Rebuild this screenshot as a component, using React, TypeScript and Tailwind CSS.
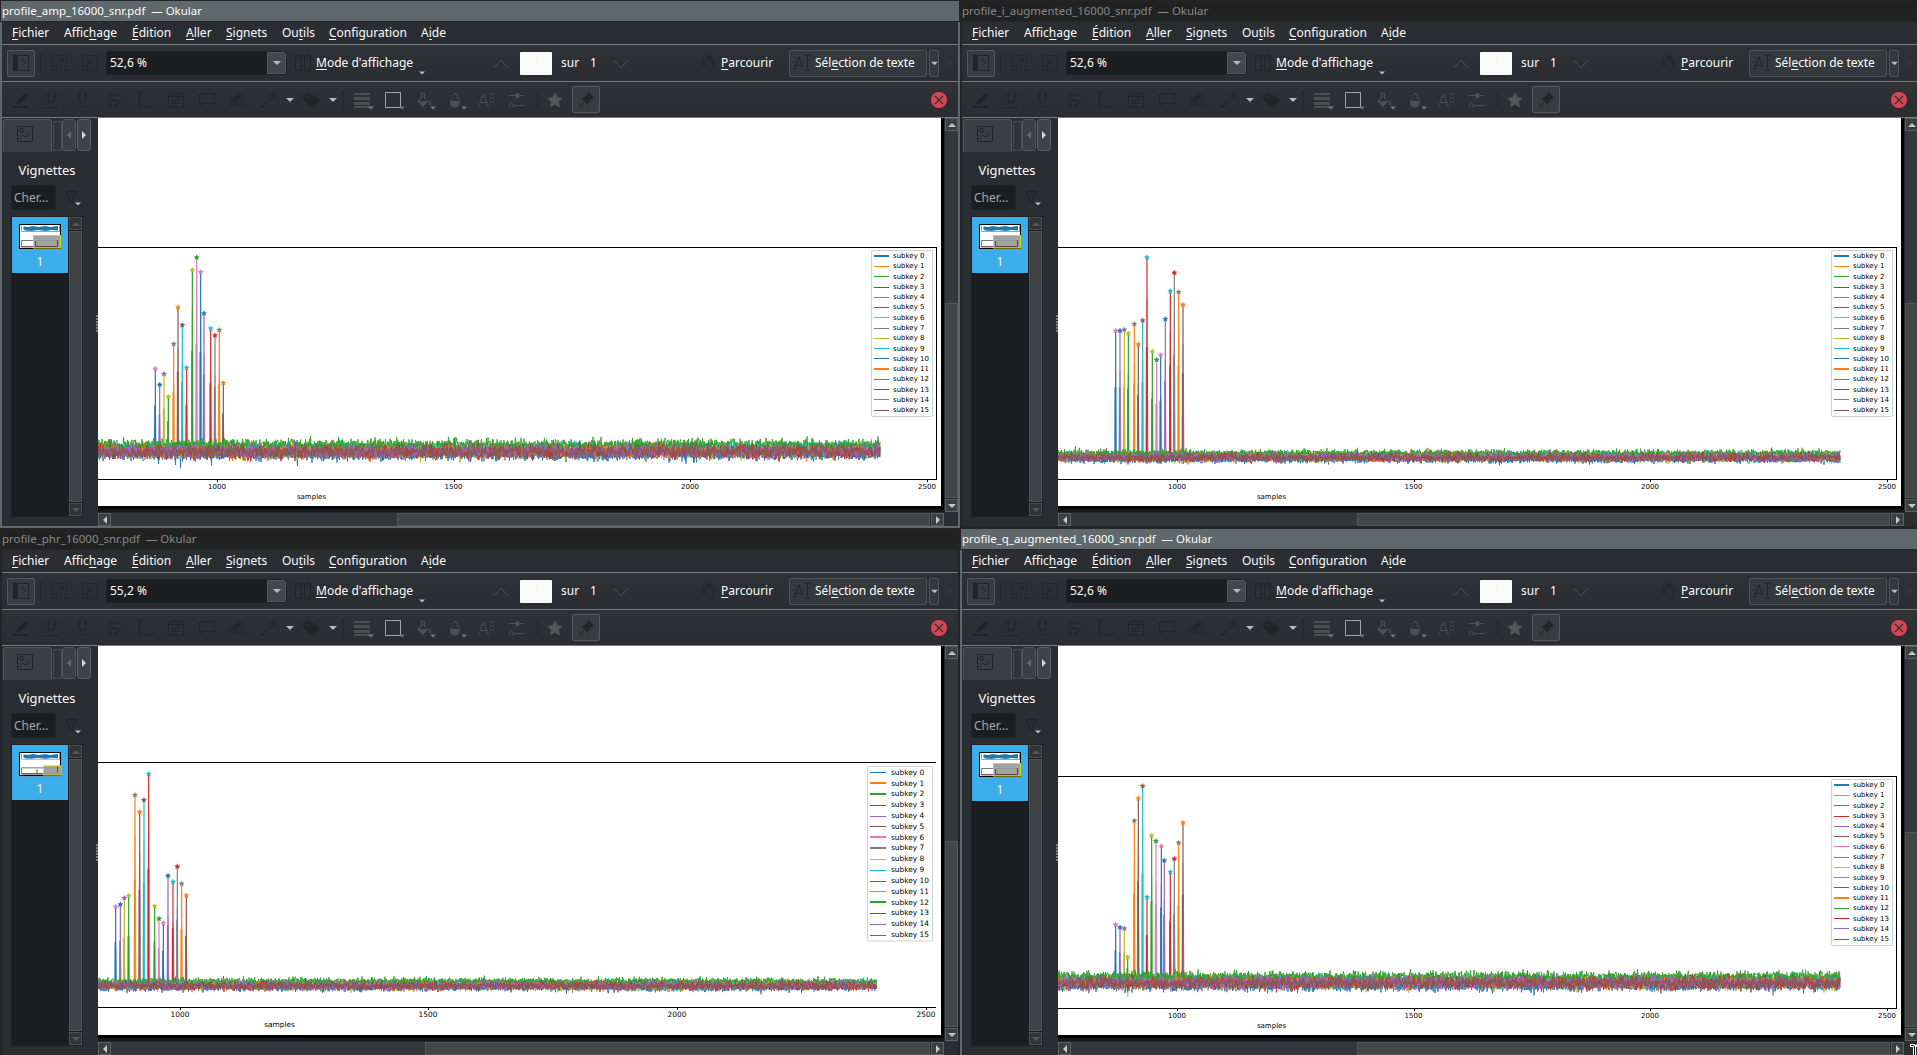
import React from "react";

const C = ["#1f77b4", "#ff7f0e", "#2ca02c", "#d62728", "#9467bd", "#8c564b", "#e377c2", "#7f7f7f", "#bcbd22", "#17becf"];

// Star colour and stem colour of the sixteen peaks, left to right.
const PEAKS: [number, number][] = [
  [6, 0], [0, 4], [4, 8], [8, 2], [7, 1], [1, 5], [5, 9], [9, 3],
  [8, 2], [2, 6], [6, 0], [0, 4], [9, 3], [3, 7], [7, 1], [1, 5],
];

type Plot = {
  peaks: [number, number][];
  top: number;
  bottom: number;
  pageBottom: number;
  right: boolean;
  end: number;
  center: number;
  spread: number;
  ticks: number[];
  label: number;
  font: number;
  legend: { x: number; y: number; w: number; h: number; row0: number; step: number; line: number; text: number; thick: number[] };
  seed: number;
};

type Win = {
  title: string;
  active: boolean;
  zoom: string;
  lower: boolean;
  vTop: number;
  hLeft: number;
  small: boolean;
  plot: Plot;
};

const at = (dx: number, dy: number, pts: [number, number][]): [number, number][] =>
  pts.map(([x, y]) => [dx + x / 3, dy + y / 3]);

const legendA = { x: 871.5, y: 250.5, w: 61, h: 166, row0: 255.7, step: 10.27, line: 15, text: 893, thick: [0, 11] };

const WINDOWS: Win[] = [
  {
    title: "profile_amp_16000_snr.pdf  — Okular", active: true, zoom: "52,6 %", lower: false, vTop: 303, hLeft: 397, small: false,
    plot: {
      peaks: at(90, 235, [[196, 401], [209, 449], [222, 417], [235, 485], [251, 327], [264, 217], [277, 270], [290, 398], [307, 105], [320, 67], [332, 111], [342, 235], [362, 280], [375, 301], [388, 285], [400, 444]]),
      top: 247, bottom: 479, pageBottom: 506, right: true, end: 880, center: 450.5, spread: 1.08, ticks: [217.5, 454, 690.5, 927.5], label: 311.5, font: 7, legend: legendA, seed: 11,
    },
  },
  {
    title: "profile_i_augmented_16000_snr.pdf  — Okular", active: false, zoom: "52,6 %", lower: false, vTop: 303, hLeft: 397, small: false,
    plot: {
      peaks: at(80, 230, [[227, 302], [240, 302], [253, 299], [265, 310], [283, 282], [295, 343], [308, 271], [321, 82], [337, 364], [350, 389], [362, 375], [376, 267], [391, 183], [403, 128], [416, 186], [429, 224]]),
      top: 247, bottom: 479, pageBottom: 506, right: true, end: 880, center: 456.7, spread: 0.68, ticks: [217.5, 454, 690.5, 927.5], label: 311.5, font: 7, legend: legendA, seed: 23,
    },
  },
  {
    title: "profile_phr_16000_snr.pdf  — Okular", active: false, zoom: "55,2 %", lower: true, vTop: 313, hLeft: 425, small: true,
    plot: {
      peaks: at(90, 227, [[77, 455], [91, 448], [103, 429], [116, 422], [135, 120], [149, 171], [162, 135], [176, 57], [194, 453], [207, 491], [220, 504], [234, 362], [249, 380], [262, 334], [275, 386], [289, 421]]),
      top: 234, bottom: 479, pageBottom: 507, right: false, end: 876.5, center: 457, spread: 0.68, ticks: [180.5, 428.5, 677.5, 926.5], label: 279.5, font: 7.4,
      legend: { x: 867.5, y: 238.5, w: 65, h: 174.5, row0: 244.3, step: 10.82, line: 16, text: 891, thick: [1, 2, 6, 7, 12] }, seed: 37,
    },
  },
  {
    title: "profile_q_augmented_16000_snr.pdf  — Okular", active: true, zoom: "52,6 %", lower: true, vTop: 304, hLeft: 397, small: false,
    plot: {
      peaks: at(80, 242, [[227, 464], [240, 472], [253, 475], [263, 561], [283, 152], [295, 85], [308, 48], [321, 381], [335, 196], [348, 213], [364, 228], [373, 271], [391, 306], [403, 266], [416, 218], [429, 158]]),
      top: 248, bottom: 480, pageBottom: 507, right: true, end: 880, center: 454, spread: 1, ticks: [217.5, 454, 690.5, 927.5], label: 311.5, font: 7,
      legend: { ...legendA, y: 251.5, row0: 256.7 }, seed: 51,
    },
  },
];

function rng(seed: number) {
  let a = seed * 7919;
  return () => {
    a = (a + 0x6d2b79f5) | 0;
    let t = Math.imul(a ^ (a >>> 15), 1 | a);
    t = (t + Math.imul(t ^ (t >>> 7), 61 | t)) ^ t;
    return ((t ^ (t >>> 14)) >>> 0) / 4294967296;
  };
}

// Vertical offset and noise amplitude of each of the sixteen traces.
const OFFSETS = [3.4, 0, -4, 1, 1, 0, 0, 1, 1, -1, 3, 0, -5.6, 1, 0.4, 1];
const AMPS = [3, 3.2, 3, 3, 3.2, 3, 3, 3, 3.4, 3.2, 2.6, 3, 2.5, 2.9, 3.2, 3];

function traces(p: Plot): { d: string; c: string }[] {
  const r = rng(p.seed);
  return OFFSETS.map((o, k) => {
    let d = "";
    for (let x = 97; x <= p.end; x += 0.5) {
      const n = (r() + r() + r() + r() - 2) * 1.75;
      const spike = r() > 0.995 ? (r() - 0.5) * 15 : 0;
      const y = p.center + p.spread * (o + n * AMPS[k] + spike);
      d += (d ? "L" : "M") + x.toFixed(1) + " " + y.toFixed(1);
    }
    return { d, c: C[k % 10] };
  });
}

const STAR = "M0 -2.6L.8 -.9L2.6 -.7L1.2 .5L1.7 2.2L0 1.3L-1.7 2.2L-1.2 .5L-2.6 -.7L-.8 -.9Z";

function Chart({ plot: p }: { plot: Plot }) {
  const l = p.legend;
  const h = p.pageBottom - 118;
  return (
    <svg width={843} height={h} viewBox={`98 118 843 ${h}`} className="block bg-white" fontFamily="'DejaVu Sans', sans-serif" fontSize={p.font}>
      {p.peaks.map(([x, y], i) => (
        <g key={i} fill="none" stroke={C[PEAKS[i][1]]}>
          <path d={`M${x - 1} ${p.center}L${x} ${y + 40}L${x + 1} ${p.center}`} strokeWidth={1.2} opacity={0.45} />
          <path d={`M${x} ${y}V${p.center}`} strokeWidth={1.2} />
          <path d={`M${x - 0.3} ${y + (p.center - y) * 0.45}V${p.center}`} strokeWidth={1.7} />
        </g>
      ))}
      {traces(p).map((t, i) => (
        <path key={i} d={t.d} stroke={t.c} fill="none" strokeWidth={i > 13 ? 1 : 0.9} />
      ))}
      {p.peaks.map(([x, y], i) => (
        <path key={i} d={STAR} transform={`translate(${x} ${y})`} fill={C[PEAKS[i][0]]} stroke={C[PEAKS[i][0]]} strokeWidth={0.4} />
      ))}
      <g fill="#000" shapeRendering="crispEdges">
        <rect x={98} y={p.top} width={838} height={1} />
        <rect x={98} y={p.bottom} width={838} height={1} />
        {p.right && <rect x={936} y={p.top} width={1} height={p.bottom - p.top + 1} />}
        {p.ticks.map((t) => (
          <rect key={t} x={Math.floor(t)} y={p.bottom} width={1} height={3} />
        ))}
      </g>
      {p.ticks.map((t, i) => (
        <text key={t} x={t - 0.5} y={p.bottom + 10.4} textAnchor="middle">{1000 + i * 500}</text>
      ))}
      <text x={p.label} y={p.bottom + 19.6} textAnchor="middle">samples</text>
      <rect x={l.x} y={l.y} width={l.w} height={l.h} rx={1.5} fill="#fff" stroke="#d0d0d0" />
      {Array.from({ length: 16 }, (_, i) => {
        const y = l.row0 + i * l.step;
        const thick = l.thick.includes(i);
        return (
          <g key={i}>
            <rect x={Math.round(l.x + 2)} y={Math.round(y) - (thick ? 1 : 0)} width={l.line} height={thick ? 2 : 1} fill={C[i % 10]} shapeRendering="crispEdges" />
            <text x={l.text} y={y + 2.4}>subkey {i}</text>
          </g>
        );
      })}
    </svg>
  );
}

function Label({ children }: { children: string }) {
  // "&" marks the mnemonic letter.
  const i = children.indexOf("&");
  return (
    <span className="block shrink-0 whitespace-nowrap origin-left scale-x-[0.9]">
      {i < 0 ? children : (
        <>
          {children.slice(0, i)}
          <span className="border-b border-[#fcfcfc] leading-[14px] inline-block">{children[i + 1]}</span>
          {children.slice(i + 2)}
        </>
      )}
    </span>
  );
}

function Icon({ d, fill, color = "#222528", className = "" }: { d: string; fill?: string; color?: string; className?: string }) {
  return (
    <svg width={16} height={16} viewBox="0 0 16 16" className={"block shrink-0 " + className} fill="none" stroke={color} strokeWidth={1}>
      {d && <path d={d} />}
      {fill && <path d={fill} fill={color} stroke="none" />}
    </svg>
  );
}

function Tri({ dir = "down", color = "#b8babb", w = 8 }: { dir?: "up" | "down" | "left" | "right"; color?: string; w?: number }) {
  const d = { down: "M0 2H8L4 6Z", up: "M0 6H8L4 2Z", left: "M6 0V8L2 4Z", right: "M2 0V8L6 4Z" }[dir];
  return (
    <svg width={w} height={w} viewBox="0 0 8 8" className="block shrink-0"><path d={d} fill={color} /></svg>
  );
}

function ScrollButton({ dir, dim }: { dir: "up" | "down" | "left" | "right"; dim?: boolean }) {
  return (
    <div className={"w-[13px] h-[13px] shrink-0 grid place-items-center border " + (dim ? "bg-[#303439] border-[#4b4f52]" : "bg-[#3b3f43] border-[#5d6163]")}>
      <Tri dir={dir} color={dim ? "#54585b" : "#c4c6c7"} />
    </div>
  );
}

const TOOL_ICONS: { d: string; fill?: string }[] = [
  { d: "", fill: "M0 14H16V16H0ZM3 12L5 8L12 1L15 4L8 11Z" },
  { d: "M0 15.500H14M4 1V8Q4 11 7.500 11Q11 11 11 8V1M5 1V8Q5 10 7.500 10Q10 10 10 8V1M2.500 1.500H6M9 1.500H12.500" },
  { d: "M0 14L2 16L5 13L8 16L11 13L14 16M4 1V8Q4 11 7.500 11Q11 11 11 8V1M5 1V8Q5 10 7.500 10Q10 10 10 8V1M2.500 1.500H6M9 1.500H12.500" },
  { d: "M0 8.500H16M12 5V1.500M12 4Q11 1.500 8 1.500Q4 1.500 4 4.500Q4 7 8 8Q12 9 12 11.500Q12 15 8 15Q5 15 4 12M4 11V15M11 4Q10 2.500 8 2.500Q5 2.500 5 4.500M11 11.500Q11 14 8 14" },
  { d: "M0 .5H5M2.500 .5V15.500M0 15.500H5M7 14.500H15.500V12" },
  { d: "M.5 2.500H15.500V15.500H.5ZM.5 4.500H15.500M3 7.500H13M3 9.500H8M3 11.500H11M3 13.500H9M3 0V3M6 0V3M9 0V3M12 0V3" },
  { d: "M.5 1.500H15.500V11.500H6L3.500 14V11.500H.5Z" },
  { d: "M1 13L2 8L9 1L13 5L6 12ZM5 12L3 9M2 8L6 12M7 14Q12 8 13 11Q13 14 16 15", fill: "M3 8L8 3L10 5L5 10Z" },
  { d: "M1.500 14.500L14 2M9 1.500H14.500V7M.5 13.500H2.500V15.500H.5Z" },
];

function Corner() {
  return <div className="absolute left-[14px] top-[13px]"><Tri w={6} color="#777a7c" /></div>;
}

function Toolbar() {
  return (
    <div className="h-[35px] flex items-center border-b border-[#77797b] bg-linear-to-b from-[#2e3136] to-[#2a2d31] box-content">
      {TOOL_ICONS.map((t, i) => (
        <div key={i} className={"w-[31px] flex " + (i === 0 ? "ml-[11px]" : "")}><Icon d={t.d} fill={t.fill} /></div>
      ))}
      <div className="-ml-[6px] w-[17px]"><Tri /></div>
      <div className="w-[26px]"><Icon d="" fill="M0 4L5 1L15 6L16 8L10 15L8 15L1 9ZM3 4V6H5V4Z" /></div>
      <Tri />
      <div className="ml-[6px] mr-[10px] w-px h-[17px] bg-[#232629]" />
      <div className="relative w-[31px]"><Icon color="#4c5053" d="" fill="M0 1H16V3H0ZM0 5H16V8H0ZM0 10H16V13H0ZM0 14H16V16H0Z" /><Corner /></div>
      <div className="relative w-[31px]"><Icon color="#a5a7a9" d="M.5 .5H15.500V15.500H.5Z" /><Corner /></div>
      <div className="relative w-[31px]"><Icon color="#4c5053" d="M5.500 7V1.500H8.500V7M2 9L7 3.500L12.500 9" fill="M1 9H13L7 15ZM14 8Q16 12 14.500 13.500Q12 12.500 14 8Z" /><Corner /></div>
      <div className="relative w-[31px]"><Icon color="#4c5053" d="M8 1Q3.500 7.500 3.500 10.500Q3.500 15 8 15Q12.500 15 12.500 10.500Q12.500 7.500 8 1Z" fill="M4 9H12Q13 14 8 15Q3 14 4 9Z" /><Corner /></div>
      <div className="w-[31px]"><Icon color="#4c5053" d="M.5 15L5.500 2L10.500 15M2 10.500H9M13 1V3M13 5V7M13 9V11M15.500 1V3M15.500 5V7M15.500 9V11" /></div>
      <div className="w-[28px]"><Icon color="#4c5053" d="M0 3.500H16M5 13.500H16M4.500 13.500A2 2 0 1 1 .5 13.500A2 2 0 1 1 4.500 13.500" fill="M8.500 1A2.500 2.500 0 1 1 8.400 1Z" /></div>
      <div className="mr-[9px] w-px h-[17px] bg-[#232629]" />
      <Icon color="#55595c" d="" fill="M8 0L10.300 5.500L16 6L11.700 9.800L13 15.500L8 12.500L3 15.500L4.300 9.800L0 6L5.700 5.500Z" />
      <div className="ml-[9px] w-[28px] h-[27px] grid place-items-center rounded-[2px] border border-[#56595c] bg-[#383c40]">
        <Icon color="#222528" d="M1 15L6 10" fill="M10 0L16 6L14 7L10 11V13L3 6L5 6L9 3Z" />
      </div>
      <svg width={16} height={16} viewBox="0 0 16 16" className="ml-auto mr-[11px] block">
        <circle cx={8} cy={8} r={8} fill="#da4453" />
        <path d="M4 4L12 12M12 4L4 12" stroke="#2a2e32" strokeWidth={1.2} />
      </svg>
    </div>
  );
}

function MainBar({ zoom }: { zoom: string }) {
  return (
    <div className="h-[36px] flex items-center border-b border-[#77797b] bg-linear-to-b from-[#2e3136] to-[#2a2d31] box-content text-[13.33px]">
      <div className="ml-[5px] w-[28px] h-[27px] shrink-0 grid place-items-center rounded-[2px] border border-[#56595c] bg-[#383c40]">
        <Icon d="M.5 .5H15.500V15.500H.5ZM8 4L12 8L8 12" fill="M0 0H5V16H0Z" />
      </div>
      <div className="ml-[5px] mr-[10px] w-px h-[17px] shrink-0 bg-[#232629]" />
      <Icon d="M.5 10.500H5.500V15.500H.5ZM7 9L12 4M8.500 3.500H12.500V7.500M0 .5H3M5 .5H8M10 .5H13M15.500 0V3M15.500 5V8M15.500 10V13M8 15.500H11M13 15.500H16M.5 2V5M.5 7V9" />
      <Icon className="ml-[15px]" d="M.5 10.500H5.500V15.500H.5ZM13 3L8 8M7.500 4.500V8.500H11.500M0 .5H3M5 .5H8M10 .5H13M15.500 0V3M15.500 5V8M15.500 10V13M8 15.500H11M13 15.500H16M.5 2V5M.5 7V9" />
      <div className="ml-[8px] w-[181px] h-[24px] shrink-0 flex items-center rounded-[3px] border border-[#202326] bg-[#1b1e20] text-[#fcfcfc]">
        <span className="ml-[3px] flex-1"><Label>{zoom}</Label></span>
        <div className="w-[19px] h-[22px] grid place-items-center rounded-r-[2px] border border-[#54585b] bg-[#43484c]"><Tri /></div>
      </div>
      <Icon className="ml-[8px]" d="M.5 .5H6.500V15.500H.5ZM9.500 .5H15.500V15.500H9.500ZM0 2H7M9 2H16" />
      <div className="ml-[5px] w-[103px] shrink-0"><Label>&Mode d'affichage</Label></div>
      <div className="mt-[19px] mr-[68px]"><Tri w={6} /></div>
      <Icon className="mt-px" color="#4c5053" d="M.5 12L8 4.500L15.500 12" />
      <div className="ml-[11px] w-[32px] h-[23px] shrink-0 rounded-[1px] bg-[#fafafa] text-center text-[#f3f3f3]">1</div>
      <div className="ml-[9px] w-[29px] shrink-0"><Label>sur</Label></div>
      <div className="w-[23px] shrink-0"><Label>1</Label></div>
      <Icon className="mt-px" color="#4c5053" d="M.5 4L8 11.500L15.500 4" />
      <Icon className="ml-[72px]" d="M3 10L1 8Q0 7 1.500 6.500L4.500 9V3Q5.500 1.500 6.500 3V7V1.500Q7.500 0 8.500 1.500V7V2Q9.500 .5 10.500 2V7.500V4Q12 2.500 12.500 4V12Q12 15.500 8 15.500Q5 15.500 3 10Z" />
      <div className="ml-[4px] w-[68px] shrink-0"><Label>&Parcourir</Label></div>
      <div className="w-[138px] h-[27px] shrink-0 flex items-center rounded-[2px] border border-[#505457] bg-[#35393d]">
        <Icon className="ml-[4px]" d="M0 15L5 2L10 15M1.500 10.500H8.500M11 .5H16M13.500 .5V15.500M11 15.500H16" />
        <div className="ml-[5px]"><Label>Sél&ection de texte</Label></div>
      </div>
      <div className="ml-[2px] w-[10px] h-[27px] shrink-0 grid place-items-center rounded-[2px] border border-[#505457] bg-[#35393d]"><Tri w={7} /></div>
      <svg width={10} height={8} className="ml-[5px] block" fill="none" stroke="#3a3e41"><path d="M1 0L4 3.500L1 7M5 0L8 3.500L5 7" /></svg>
    </div>
  );
}

function Thumbnail({ small }: { small: boolean }) {
  return (
    <svg width={42} height={small ? 24 : 25} viewBox="0 0 42 25" preserveAspectRatio="none" className="block overflow-visible">
      <rect x={1} y={1} width={41.500} height={24.500} fill="#8a8f93" />
      <rect x={.5} y={.5} width={41} height={24} fill="#fff" stroke="#000" />
      <path d="M2.500 1.500V7.500H40.500V1.500" fill="none" stroke="#777" strokeWidth={0.7} />
      <path d="M4 4.500L5 2.500L9 3L14 2L20 3L26 2L31 3L39 2V6.500L32 6L27 7L19 6L12 7L6 6.500Z" fill="#1f77b4" />
      <path d="M2.500 16.500H39.500V23H2.500Z" fill="none" stroke="#555" strokeWidth={0.8} />
      <path d="M3 22.500H39M18 22V18" stroke="#8c564b" strokeWidth={1.2} />
      <rect x={small ? 24.500 : 14.500} y={small ? 14.500 : 11.500} width={small ? 17.500 : 27} height={small ? 9.500 : 12.500} fill="#999" fillOpacity={.9} stroke="#d8d800" />
      <path d={small ? "M38.500 15V21" : "M16.500 22V17M16 22.500H38.500V16"} stroke="#55484a" fill="none" />
    </svg>
  );
}

function Sidebar({ win }: { win: Win }) {
  return (
    <div className="w-[96px] shrink-0 flex flex-col bg-[#2a2e32] text-[#fcfcfc]">
      <div className="flex h-[34px] pl-px pt-px">
        <div className="w-[49px] h-[33px] rounded-t-[3px] border border-b-0 border-[#53575a] bg-[#3b3f43] flex justify-center pt-[6px]">
          <Icon className="-ml-[5px]" d="M.5 .5H15.500V15.500H.5ZM2 13L6 9L9 11L13 7M6.500 4.500A2 2 0 1 1 2.500 4.500A2 2 0 1 1 6.500 4.500" />
        </div>
        <div className="ml-px mt-[2px] w-[9px] h-[30px] border border-[#4a4e51] bg-[#303438]" />
        <div className="w-[14px] h-[32px] grid place-items-center rounded-[3px] border border-[#54585b] bg-[#3b3f43]"><Tri dir="left" color="#666a6d" /></div>
        <div className="ml-px w-[14px] h-[32px] grid place-items-center rounded-[3px] border border-[#5d6164] bg-[#3f4347]"><Tri dir="right" color="#d6d7d8" /></div>
      </div>
      <div className="h-[33px] pt-[8px] w-[90px] text-center text-[12.900px] leading-[20px]">Vignettes</div>
      <div className="flex pl-[9px]">
        <div className="w-[45px] h-[25px] rounded-[3px] bg-[#1b1e20] border border-[#202326] pl-[2px] flex items-center text-[13.33px] text-[#a3a6a8] overflow-hidden"><Label>Cher...</Label></div>
        <div className="relative ml-[9px] mt-[6px]">
          <svg width={12} height={12} className="block" fill="none" stroke="#202326"><path d="M.5 .5H11.500L7.500 6V11.500L4.500 9V6Z" /></svg>
          <div className="absolute left-[10px] top-[10px]"><Tri w={6} /></div>
        </div>
      </div>
      <div className={"mt-[6px] ml-[9px] w-[72px] flex border border-[#202326] bg-[#1b1e20] " + (win.lower ? "h-[302px]" : "h-[301px]")}>
        <div className="w-[56px]">
          <div className={"flex flex-col items-center bg-[#3daee9] pt-[7px] " + (win.small ? "h-[55px]" : "h-[56px]")}>
            <Thumbnail small={win.small} />
            <span className="mt-[3px] text-[12px] leading-[20px] text-[#e8f2f8]">1</span>
          </div>
        </div>
        <div className="ml-px flex flex-col justify-between">
          <ScrollButton dir="up" dim />
          <div className="flex-1 my-px border border-[#4f5356] bg-[#3f4246]" />
          <ScrollButton dir="down" dim />
        </div>
      </div>
    </div>
  );
}

const MENU: [string, string][] = [
  ["&Fichier", "w-[52px]"], ["Affic&hage", "w-[68px]"], ["&Édition", "w-[54px]"], ["&Aller", "w-[40px]"],
  ["&Signets", "w-[56px]"], ["Ou&tils", "w-[47px]"], ["&Configuration", "w-[92px]"], ["A&ide", "w-[40px]"],
];

function OkularWindow({ win }: { win: Win }) {
  const p = win.plot;
  const barBottom = win.lower ? 500 : 499;
  return (
    <section className="w-[960px] h-[528px] overflow-hidden flex flex-col bg-[#232527]">
      <header className={"mt-px ml-px mr-px h-[20px] shrink-0 pl-px text-[11.450px] leading-[20px] whitespace-pre " + (win.active ? "bg-[#5f686b] text-[#fcfcfc]" : "bg-[#222] text-[#85898b]")}>
        {win.title}
      </header>
      <div className={"flex-1 min-h-0 mt-px flex flex-col border-x-2 " + (win.lower ? "border-b-[1px] " : "border-b-2 ") + (win.active ? "border-[#5f686b]" : "border-[#222425]")}>
        <nav className="h-[22px] shrink-0 box-content border-b border-[#77797b] bg-[#2a2d32] flex items-center pl-[10px] text-[13.33px] text-[#fcfcfc]">
          {MENU.map(([t, w]) => (
            <div key={t} className={w}><Label>{t}</Label></div>
          ))}
        </nav>
        <div className="shrink-0 text-[#fcfcfc]">
          <MainBar zoom={win.zoom} />
          <Toolbar />
        </div>
        <div className="flex-1 min-h-0 flex bg-[#2a2e32]">
          <div className="relative flex">
            <Sidebar win={win} />
            <div className={"absolute right-0 w-[2px] flex flex-col gap-px " + (win.lower ? "top-[198px]" : "top-[197px]")}>
              {[0, 1, 2, 3, 4, 5].map((i) => <div key={i} className="h-[2px] bg-[#7c7f81]" />)}
            </div>
          </div>
          <div className="w-[846px] flex flex-col bg-[#15171a]">
            <div className="flex-1 min-h-0">
              <div className="w-[846px] border-r-[3px] border-b-[3px] border-black"><Chart plot={p} /></div>
            </div>
            <div className="h-[14px] shrink-0 flex bg-[#26292c] pt-px">
              <ScrollButton dir="left" />
              <div className="h-[13px] bg-[#34383c]" style={{ width: win.hLeft - 111 }} />
              <div className="flex-1 h-[13px] mr-px border border-[#53575a] bg-[#424649]" />
              <ScrollButton dir="right" />
            </div>
          </div>
          <div className="w-[14px] pl-px flex flex-col bg-[#232629]">
            <ScrollButton dir="up" />
            <div className="w-[13px] bg-[#34383c]" style={{ height: win.vTop - 131 }} />
            <div className="w-[13px] border border-[#53575a] bg-[#424649]" style={{ height: barBottom - 1 - win.vTop }} />
            <div className="mt-px"><ScrollButton dir="down" /></div>
            <div className="flex-1 -ml-px bg-[#2a2e32]" />
          </div>
        </div>
      </div>
    </section>
  );
}

// Text-beam mouse pointer resting at the screen's lower right corner.
function Pointer() {
  return (
    <svg width={7} height={11} viewBox="0 0 7 11" className="absolute right-0 bottom-0 block">
      <path d="M0 0H4L5.500 1L7 0V3H6V11H3V3H0Z" fill="#fff" />
      <path d="M1 1.500H3.500L4.500 3V11" fill="none" stroke="#000" />
    </svg>
  );
}

export default function App() {
  return (
    <main className="relative w-[1917px] h-[1055px] overflow-hidden bg-[#232527] font-['Noto_Sans',sans-serif]">
      <div className="w-[1920px] grid grid-cols-2">
        {WINDOWS.map((w) => <OkularWindow key={w.title} win={w} />)}
      </div>
      <Pointer />
    </main>
  );
}
